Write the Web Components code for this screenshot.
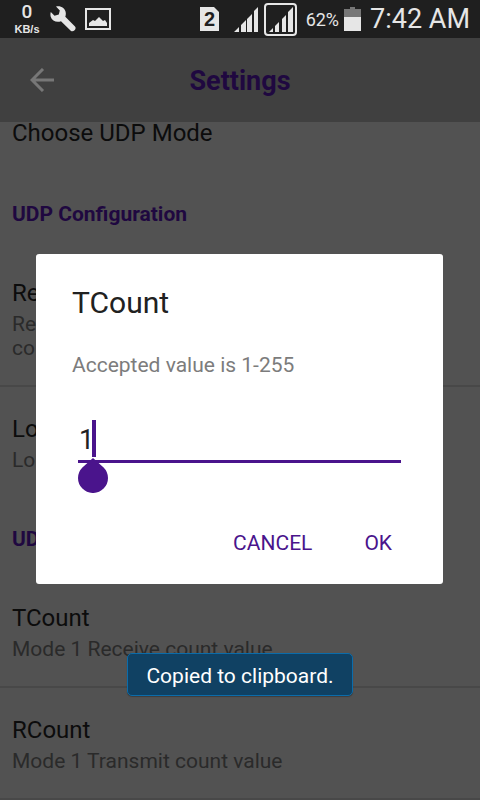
<!DOCTYPE html>
<html lang="en">
<head>
<meta charset="utf-8">
<meta name="viewport" content="width=device-width, initial-scale=1">
<title>Settings</title>
<style>
  html, body { margin: 0; height: 100%; }
  body { font-family: Roboto, "Noto Sans", sans-serif; background: #525252; overflow: hidden; }
</style>
</head>
<body>
<settings-screen></settings-screen>
<script>
function define(name, html) {
  const template = document.createElement('template');
  template.innerHTML = html;
  customElements.define(name, class extends HTMLElement {
    constructor() {
      super();
      this.attachShadow({ mode: 'open' }).append(template.content.cloneNode(true));
    }
  });
}

define('status-bar', `
  <style>
    :host { display: flex; align-items: center; height: 38px; box-sizing: border-box;
      padding: 0 10px 0 13px; background: #1f1f1f; color: #e6e6e6; flex: none; }
    svg { display: block; flex: none; }
    .speed { display: flex; flex-direction: column; align-items: center; width: 28px; }
    .speed b { font: 500 19px/20px Roboto, sans-serif; }
    .speed span { font: bold 11px/14px "Liberation Sans", sans-serif; }
    .left { display: flex; align-items: center; gap: 9px; flex: 1; }
    .right { display: flex; align-items: center; }
    .sim { font: bold 18px "Liberation Sans", sans-serif; }
    .signal { margin-left: 15px; }
    .signal + .signal { margin-left: 6px; }
    .signal.active { border: 2px solid #e6e6e6; border-radius: 4px; padding: 2px 2px 2px 3px; }
    .pct { font-size: 18px; line-height: 38px; margin: 2px 5px 0 9px; }
    .time { font-size: 27px; line-height: 38px; margin-left: 9px; }
  </style>
  <div class="left">
    <div class="speed"><b>0</b><span>KB/s</span></div>
    <svg width="26" height="26" viewBox="0 0 26 26"><path fill="#e6e6e6" d="M6 .6C10-.8 15.500 2 15.800 7C15.900 8.500 15.700 9.500 15.300 10.800L25 20.500C27 22.800 23.600 26.400 21 25L11 15.200C7 16.700 2 15.300 .7 10.700C.3 9 .3 7.500 .8 6L4.500 9.700L8.800 8.600L9.800 4.500Z"/></svg>
    <svg width="26" height="22" viewBox="0 0 26 22"><path fill="none" stroke="#e6e6e6" stroke-width="2" d="M1 1H25V21H1Z"/><path fill="#e6e6e6" d="M4 18V15L8 12L10 13L14 9L18 13L20 12L22 15V18Z"/></svg>
  </div>
  <div class="right">
    <svg class="sim" width="19" height="24" viewBox="0 0 19 24"><path fill="#e6e6e6" d="M0 0H14L19 5V24H0Z"/><text x="9.500" y="19" text-anchor="middle" font-size="20" fill="#1f1f1f">2</text></svg>
    <svg class="signal" width="24" height="25" viewBox="0 0 24 25"><path fill="#e6e6e6" d="M0 25L5 20V25ZM7 18L12 13V25H7ZM13 12L18 7V25H13ZM20 4L24 0V25H20Z"/></svg>
    <svg class="signal active" width="24" height="25" viewBox="0 0 24 25"><path fill="#e6e6e6" d="M0 25L4 21V25ZM6 19L10 15V25H6ZM13 12L17 8V25H13ZM19 5L24 0V25H19Z"/></svg>
    <span class="pct">62%</span>
    <svg width="17" height="24" viewBox="0 0 17 24"><path fill="#777" d="M0 2H6V0H11V2H17V11H0Z"/><path fill="#e6e6e6" d="M0 10H17V24H0Z"/></svg>
    <span class="time">7:42 AM</span>
  </div>`);

define('app-bar', `
  <style>
    :host { display: grid; grid-template-columns: 84px 1fr 84px; align-items: center;
      height: 84px; background: #404040; flex: none; }
    button { border: 0; background: none; padding: 0; height: 84px; display: grid; place-items: center; }
    h1 { margin: 2px 0 0; text-align: center; font-size: 27px; line-height: 36px; font-weight: 700; color: #1f0840; }
  </style>
  <button aria-label="Back"><svg width="24" height="24" viewBox="0 0 24 24"><path d="M24 12H2M13 1L2 12L13 23" fill="none" stroke="#777" stroke-width="3"/></svg></button>
  <h1><slot></slot></h1>`);

define('pref-category', `
  <style>
    :host { display: block; padding: 30px 12px 25px; }
    h2 { margin: 0; font-size: 21px; line-height: 24px; font-weight: 700; color: #1f0840; }
  </style>
  <h2><slot></slot></h2>`);

define('pref-row', `
  <style>
    :host { display: flex; flex-direction: column; gap: 3px; padding: 26px 12px 25px; border-bottom: 2px solid #484848; }
    :host([last]) { border-bottom: 0; }
    :host([scrolled]) { padding: 0 12px 28px; border: 0; }
    .title { font-size: 24px; line-height: 32px; color: #0c0c0c; }
    :host([scrolled]) .title { line-height: 22px; }
    ::slotted([slot=summary]) { font-size: 21px; line-height: 24px; color: #2a2a2a; }
  </style>
  <div class="title"><slot></slot></div>
  <slot name="summary"></slot>`);

define('value-field', `
  <style>
    :host { display: block; position: relative; margin: 0 6px; }
    input { display: block; width: 100%; height: 46px; box-sizing: border-box; border: 0;
      border-bottom: 3px solid #4a148c; border-radius: 0; padding: 2px 0 0 1px; background: none; outline: 0;
      font: 27px/36px Roboto, sans-serif; color: #212121; }
    .caret { position: absolute; left: 14px; top: 3px; width: 4px; height: 37px; background: #4a148c; }
    svg { position: absolute; left: 0; top: 41px; }
  </style>
  <input type="text" inputmode="numeric" value="1" aria-label="TCount">
  <span class="caret"></span>
  <svg width="30" height="35" viewBox="0 0 30 35"><path fill="#4a148c" d="M15 0L25.600 9.400A15 15 0 1 1 4.400 9.400Z"/></svg>`);

define('value-dialog', `
  <style>
    :host { display: block; width: 100%; box-sizing: border-box; background: #fff; border-radius: 3px; padding: 30px 36px 17px; }
    h2 { margin: 0; font-size: 30px; line-height: 38px; font-weight: 400; color: #212121; }
    p { margin: 30px 0 39px; font-size: 21px; line-height: 26px; color: #7c7c7c; }
    .actions { display: flex; justify-content: flex-end; gap: 28px; margin: 56px 3px 0 0; }
    button { border: 0; background: none; padding: 0 12px; height: 48px; font: 21px/24px Roboto, sans-serif; color: #4a148c; }
  </style>
  <h2><slot name="title"></slot></h2>
  <p><slot name="message"></slot></p>
  <value-field></value-field>
  <div class="actions"><button>CANCEL</button><button>OK</button></div>`);

define('toast-message', `
  <style>
    :host { display: block; box-sizing: border-box; padding: 10px 18px 6px; border: 1px solid #0a6cab; border-radius: 5px;
      background: #104163; color: #fff; font-size: 21px; line-height: 25px; box-shadow: 0 1px 1px #0004; white-space: nowrap; }
  </style>
  <slot></slot>`);

define('settings-screen', `
  <style>
    :host { display: flex; flex-direction: column; height: 100vh; position: relative; overflow: hidden; }
    main { flex: 1; min-height: 0; }
    .modal { position: absolute; inset: 38px 0 0; display: flex; align-items: center; padding: 0 37px 0 36px; }
    .toast { position: absolute; inset: auto 0 104px; display: flex; justify-content: center; }
  </style>
  <status-bar></status-bar>
  <app-bar>Settings</app-bar>
  <main>
    <pref-row scrolled>Choose UDP Mode</pref-row>
    <pref-category>UDP Configuration</pref-category>
    <pref-row>Re<span slot="summary">Re<br>co</span></pref-row>
    <pref-row last>Lo<span slot="summary">Lo</span></pref-row>
    <pref-category>UD</pref-category>
    <pref-row>TCount<span slot="summary">Mode 1 Receive count value</span></pref-row>
    <pref-row>RCount<span slot="summary">Mode 1 Transmit count value</span></pref-row>
  </main>
  <div class="modal">
    <value-dialog role="dialog" aria-modal="true"><span slot="title">TCount</span><span slot="message">Accepted value is 1-255</span></value-dialog>
  </div>
  <div class="toast"><toast-message role="status">Copied to clipboard.</toast-message></div>`);
</script>
</body>
</html>
